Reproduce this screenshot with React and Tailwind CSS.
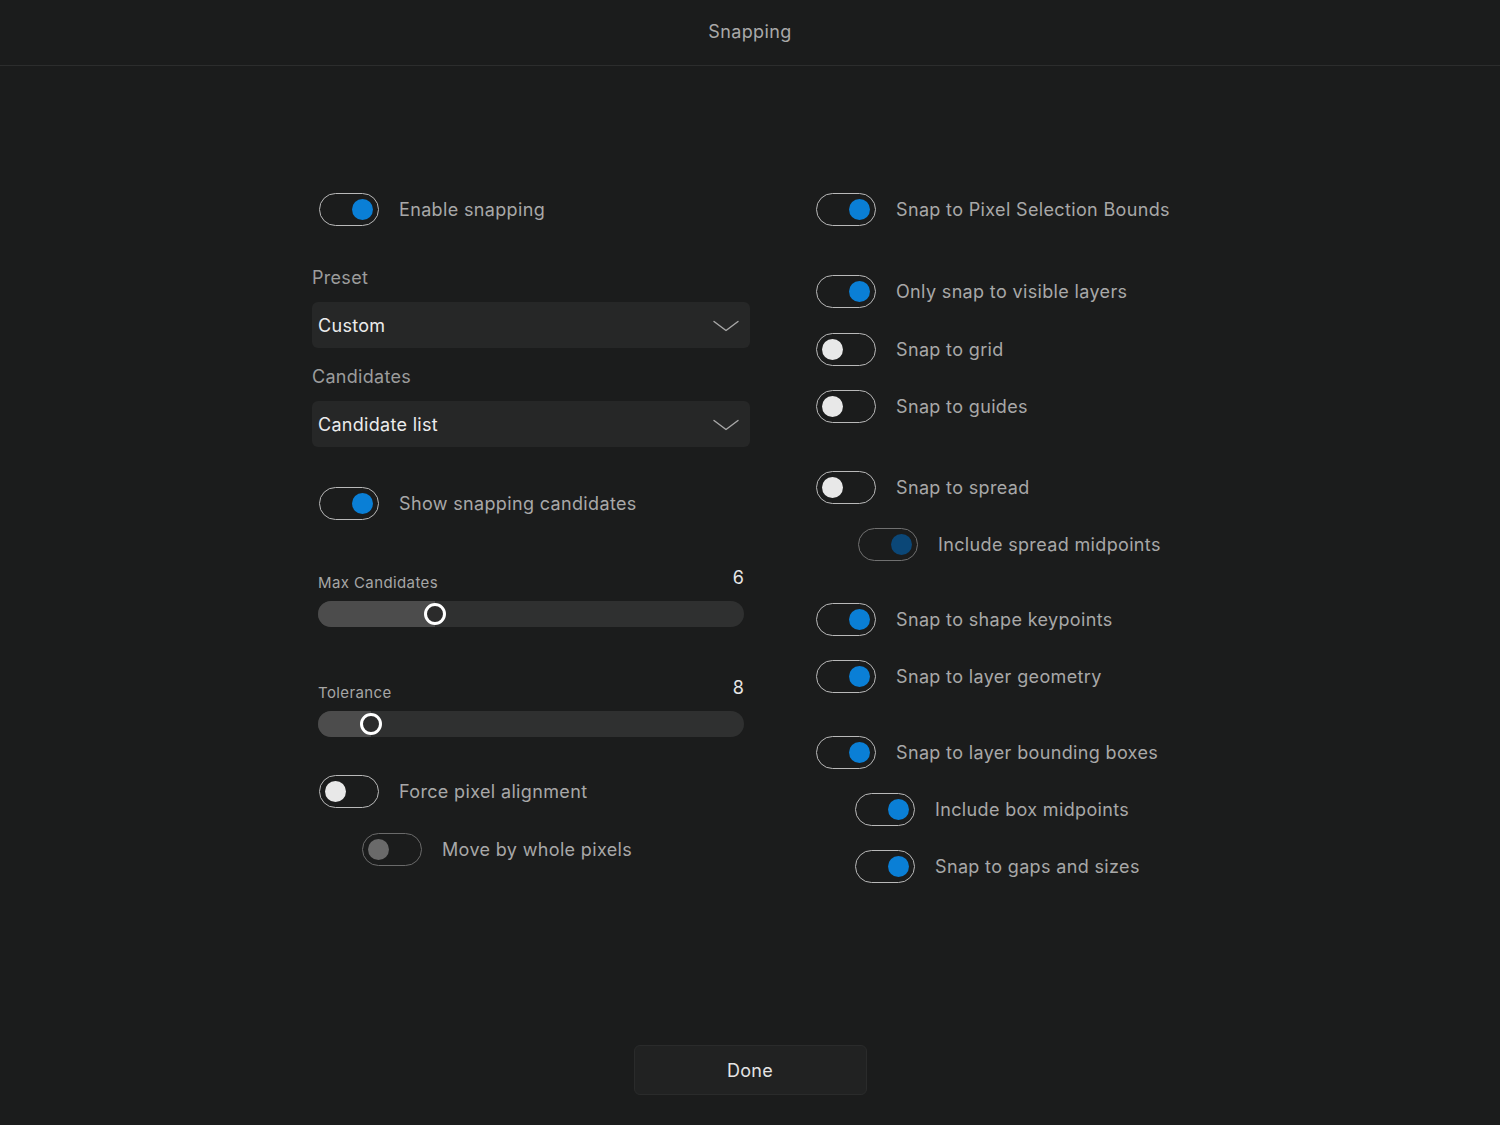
import React from 'react'

const font = { fontFamily: 'Inter, "Noto Sans", sans-serif' }

const Toggle = ({ on, disabled, label, indent }) => {
  let knob = on ? 'bg-[#0a7fd6] ml-auto mr-[5px]' : 'bg-[#e8e8e8] ml-[5px]'
  let border = 'border-[#b9b9b9]'
  let text = 'text-[#a8a8a8]'
  if (disabled && on) {
    knob = 'bg-[#0b4777] ml-auto mr-[5px]'
    border = 'border-[#707070]'
  }
  if (disabled && !on) {
    knob = 'bg-[#6a6a6a] ml-[5px]'
    border = 'border-[#6a6a6a]'
  }
  return (
    <div className={`flex items-center h-8 ${indent}`}>
      <div className={`flex items-center w-[60px] h-[33px] rounded-full border-[1.5px] ${border}`}>
        <div className={`w-[21px] h-[21px] rounded-full ${knob}`} />
      </div>
      <span className={`ml-5 text-[18px] tracking-[0.35px] ${text}`}>{label}</span>
    </div>
  )
}

const Dropdown = ({ value, className }) => (
  <div className={`flex items-center justify-between h-[46px] rounded-md bg-[#262727] pl-[6px] pr-[11px] ${className}`}>
    <span className="text-[18px] text-[#ececec] tracking-[0.3px] mt-[1px]">{value}</span>
    <svg width="26" height="12" viewBox="0 0 26 12" fill="none" className="mt-[2px]">
      <path d="M1 1.5 L13 10.5 L25 1.5" stroke="#a8a8a8" strokeWidth="1.4" strokeLinecap="round" strokeLinejoin="round" />
    </svg>
  </div>
)

const Slider = ({ label, value, pos, className }) => (
  <div className={`pl-[6px] pr-[6px] ${className}`}>
    <div className="flex items-end justify-between h-6">
      <span className="text-[15px] text-[#a6a6a6] tracking-[0.4px] leading-[20px]">{label}</span>
      <span className="text-[18px] text-[#e6e6e6] leading-[24px] mb-[3px]">{value}</span>
    </div>
    <div className="relative mt-2 h-[26px] rounded-full bg-[#2f3030] overflow-visible">
      <div className="h-full rounded-l-full bg-[#4c4c4c]" style={{ width: pos }} />
      <div
        className="absolute top-[2px] w-[22px] h-[22px] rounded-full border-[3px] border-white bg-[#2b2b2b]"
        style={{ left: pos - 11 }}
      />
    </div>
  </div>
)

export default function App() {
  return (
    <div className="h-screen w-full bg-[#1b1c1c] flex flex-col" style={font}>
      <header className="h-[66px] border-b border-[#2c2d2d] flex items-center justify-center">
        <span className="text-[18px] text-[#a9a9a9] tracking-[0.4px] -mt-[2px]">Snapping</span>
      </header>

      <div className="flex-1 flex pl-[312px] pt-[127px]">
        <div className="w-[438px] flex flex-col">
          <Toggle on label="Enable snapping" indent="ml-[7px]" />
          <div className="mt-[41px] h-6 leading-6 text-[18px] text-[#9c9c9c] tracking-[0.3px]">Preset</div>
          <Dropdown value="Custom" className="mt-[12px]" />
          <div className="mt-[17px] h-6 leading-6 text-[18px] text-[#9c9c9c] tracking-[0.3px]">Candidates</div>
          <Dropdown value="Candidate list" className="mt-[12px]" />
          <div className="mt-10">
            <Toggle on label="Show snapping candidates" indent="ml-[7px]" />
          </div>
          <Slider label="Max Candidates" value="6" pos={117} className="mt-[50px]" />
          <Slider label="Tolerance" value="8" pos={53} className="mt-[52px]" />
          <div className="mt-[38px]">
            <Toggle label="Force pixel alignment" indent="ml-[7px]" />
          </div>
          <div className="mt-[26px]">
            <Toggle disabled label="Move by whole pixels" indent="ml-[50px]" />
          </div>
        </div>

        <div className="ml-[66px] flex flex-col">
          <Toggle on label="Snap to Pixel Selection Bounds" />
          <div className="mt-[50px]"><Toggle on label="Only snap to visible layers" /></div>
          <div className="mt-[26px]"><Toggle label="Snap to grid" /></div>
          <div className="mt-[25px]"><Toggle label="Snap to guides" /></div>
          <div className="mt-[49px]"><Toggle label="Snap to spread" /></div>
          <div className="mt-[25px]"><Toggle on disabled label="Include spread midpoints" indent="ml-[42px]" /></div>
          <div className="mt-[43px]"><Toggle on label="Snap to shape keypoints" /></div>
          <div className="mt-[25px]"><Toggle on label="Snap to layer geometry" /></div>
          <div className="mt-[44px]"><Toggle on label="Snap to layer bounding boxes" /></div>
          <div className="mt-[25px]"><Toggle on label="Include box midpoints" indent="ml-[39px]" /></div>
          <div className="mt-[25px]"><Toggle on label="Snap to gaps and sizes" indent="ml-[39px]" /></div>
        </div>
      </div>

      <footer className="flex justify-center pb-[30px]">
        <button className="w-[233px] h-[50px] rounded-md bg-[#212222] border border-[#2a2b2b] text-[18px] text-[#e4e4e4] tracking-[0.3px]">
          Done
        </button>
      </footer>
    </div>
  )
}
